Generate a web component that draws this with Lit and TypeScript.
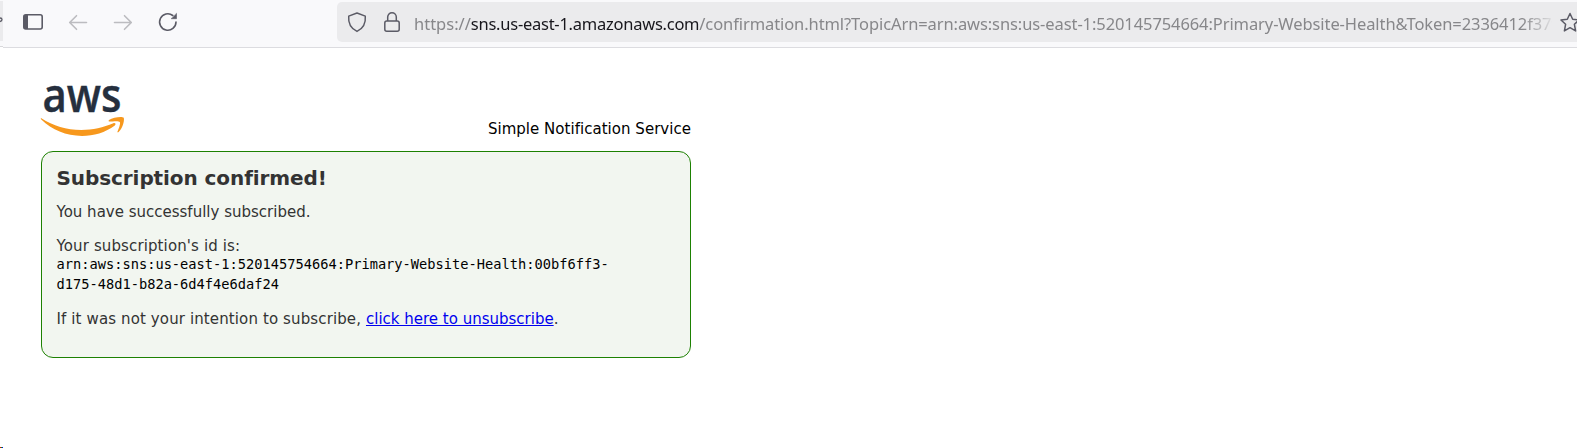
import { LitElement, html, css } from "lit";
import { customElement } from "lit/decorators.js";

@customElement("browser-toolbar")
class BrowserToolbar extends LitElement {
  static styles = css`
    :host { display: block; height: 48px; }
    .bar { display: flex; height: 48px; box-sizing: border-box; }
    .edge { width: 3px; height: 47px; box-sizing: border-box; padding-top: 1px; border-bottom: 1px solid #d8d8db; background: #f9f9fb; flex: none; }
    .edge svg { display: block; background: #ebebed; }
    .main { flex: 1; min-width: 0; height: 48px; box-sizing: border-box; display: flex; background: #f9f9fb; border-bottom: 1px solid #dcdce0; }
    .nav { width: 334px; flex: none; }
    .nav svg, .icons svg, .star svg { display: block; }
    .url { flex: 1; min-width: 0; margin-top: 2px; height: 40px; background: #ebebed; border-radius: 5px 0 0 5px; display: flex; overflow: hidden; }
    .icons { width: 77px; flex: none; }
    .address { width: 1138px; flex: none; white-space: nowrap; line-height: 44px; font-family: "Noto Sans", sans-serif; font-size: 16.5px; color: #87878a; -webkit-mask-image: linear-gradient(to right, #000 1108px, transparent 1142px); mask-image: linear-gradient(to right, #000 1108px, transparent 1142px); }
    .scheme, .host, .path { display: inline-block; }
    .host { color: #17161c; letter-spacing: -0.25px; }
    .path { letter-spacing: -0.09px; }
    .star { width: 25px; flex: none; }
  `;
  render() {
    return html`
      <div class="bar">
        <div class="edge"><svg width="3" height="40" viewBox="0 0 3 40"><path d="M0 17q2 0 2 1.500T0 20.500" fill="none" stroke="#5b5b66" stroke-width="1.300" /></svg></div>
        <div class="main">
          <div class="nav">
            <svg width="334" height="47" viewBox="3 0 334 47" fill="none" stroke-width="1.600" stroke-linecap="round" stroke-linejoin="round">
              <rect x="23.800" y="14.800" width="18.400" height="14.200" rx="2" stroke="#5b5b66" />
              <path d="M24 15h4v14h-4z" fill="#5b5b66" stroke="none" />
              <g stroke="#bcbcc0"><path d="M86.500 22.500H70M76.500 15.700l-6.800 6.800 6.800 6.800M114.500 22.500H131M124.500 15.700l6.800 6.800-6.800 6.800" /></g>
              <path d="M176 22a8.200 8.200 0 1 1-3.200-6.500" stroke="#5b5b66" />
              <path d="M176.500 13.700v5h-5z" fill="#5b5b66" stroke="#5b5b66" stroke-width=".6" />
            </svg>
          </div>
          <div class="url">
            <div class="icons">
              <svg width="77" height="40" viewBox="337 2 77 40" fill="none" stroke="#5b5b66" stroke-width="1.500" stroke-linejoin="round">
                <path d="M357 13l8.300 3.100c.5 5.800-1.700 12.200-8.300 15.300-6.600-3.100-8.800-9.500-8.300-15.300z" />
                <rect x="384.800" y="21" width="14.400" height="10.200" rx="2" />
                <path d="M387.700 21v-4a4.300 4.300 0 0 1 8.600 0v4" />
              </svg>
            </div>
            <div class="address"><span class="scheme">https://</span><span class="host">sns.us-east-1.amazonaws.com</span><span class="path">/confirmation.html?TopicArn=arn:aws:sns:us-east-1:520145754664:Primary-Website-Health&amp;Token=2336412f37f</span></div>
            <div class="star">
              <svg width="26" height="40" viewBox="1552 2 26 40" fill="none" stroke="#5b5b66" stroke-width="1.500" stroke-linejoin="round">
                <path d="M1570 13.500l2.700 5.700 6.300.8-4.600 4.300 1.200 6.600-5.600-3.200-5.600 3.200 1.200-6.600-4.600-4.300 6.300-.8z" />
              </svg>
            </div>
          </div>
        </div>
      </div>
    `;
  }
}

@customElement("confirmation-page")
class ConfirmationPage extends LitElement {
  static styles = css`
    :host { display: block; font-family: Verdana, "DejaVu Sans", sans-serif; font-size: 15px; line-height: 20px; color: #333; }
    .sheet { width: 650px; padding: 33px 0 0 41px; }
    .head { display: flex; justify-content: space-between; align-items: flex-end; height: 70px; }
    .logo { display: block; width: 86px; height: 60px; align-self: flex-start; overflow: visible; }
    .word { font: 600 46.5px "Open Sans", "Noto Sans", sans-serif; fill: #252f3e; stroke: #252f3e; stroke-width: 0.4px; }
    .service { color: #000; padding-bottom: 12px; white-space: nowrap; letter-spacing: 0.03px; }
    .card { box-sizing: border-box; height: 207px; border: 1px solid #1d8102; border-radius: 12px; background: #f2f6f0; padding: 13px 14.5px; }
    h1 { margin: 0; font-size: 20px; line-height: 26px; font-weight: bold; letter-spacing: -0.08px; }
    p { margin: 0; white-space: nowrap; }
    .done { margin-top: 11px; }
    .id { margin-top: 14px; letter-spacing: 0.12px; }
    .arn { font-family: "DejaVu Sans Mono", monospace; font-size: 13.7px; line-height: 20px; color: #000; margin-top: -2px; }
    .arn span { display: table; }
    .undo { margin-top: 15px; }
    .lead { letter-spacing: 0.12px; }
    a { color: #00e; text-decoration: underline; }
  `;
  render() {
    return html`
      <div class="sheet">
        <div class="head">
          <svg class="logo" viewBox="41 81 86 60">
            <text class="word" x="42.500" y="111.500" textLength="79" lengthAdjust="spacingAndGlyphs">aws</text>
            <path d="M41.300 118.200c12 7.500 25 11.800 40 11.800 11.500 0 22-2.500 32-6.700 1.800-.8 3.200 1 1.500 2.200C105.500 132.500 93.500 136 82 136c-16 0-30-6-40.700-16.400-.8-.8-.5-1.800 0-1.400z" fill="#f7981d" />
            <path d="M109 120c4-3 13.500-3.800 14.600-2.400 1.200 1.500-.4 10.500-5 14.500-.7.600-1.400.2-1.100-.6 1.200-2.900 3.300-8.300 2.300-9.600-1-1.300-7-.6-10.200-.3-1 .1-1.300-.8-.6-1.600z" fill="#f7981d" />
          </svg>
          <div class="service">Simple Notification Service</div>
        </div>
        <div class="card">
          <h1>Subscription confirmed!</h1>
          <p class="done">You have successfully subscribed.</p>
          <p class="id">Your subscription's id is:</p>
          <p class="arn"><span>arn:aws:sns:us-east-1:520145754664:Primary-Website-Health:00bf6ff3-</span><span>d175-48d1-b82a-6d4f4e6daf24</span></p>
          <p class="undo"><span class="lead">If it was not your intention to subscribe, </span><a href="#">click here to unsubscribe</a>.</p>
        </div>
      </div>
    `;
  }
}

@customElement("app-root")
class AppRoot extends LitElement {
  static styles = css`
    :host { display: flex; flex-direction: column; height: 448px; overflow: hidden; background: #fff; }
    confirmation-page { flex: 1; min-height: 0; }
    .fringe { width: 3px; height: 1px; flex: none; background: linear-gradient(to right, #e00000 1px, #00a000 1px 2px, #0000e0 2px); }
  `;
  render() {
    return html`<browser-toolbar></browser-toolbar><confirmation-page></confirmation-page><div class="fringe"></div>`;
  }
}
